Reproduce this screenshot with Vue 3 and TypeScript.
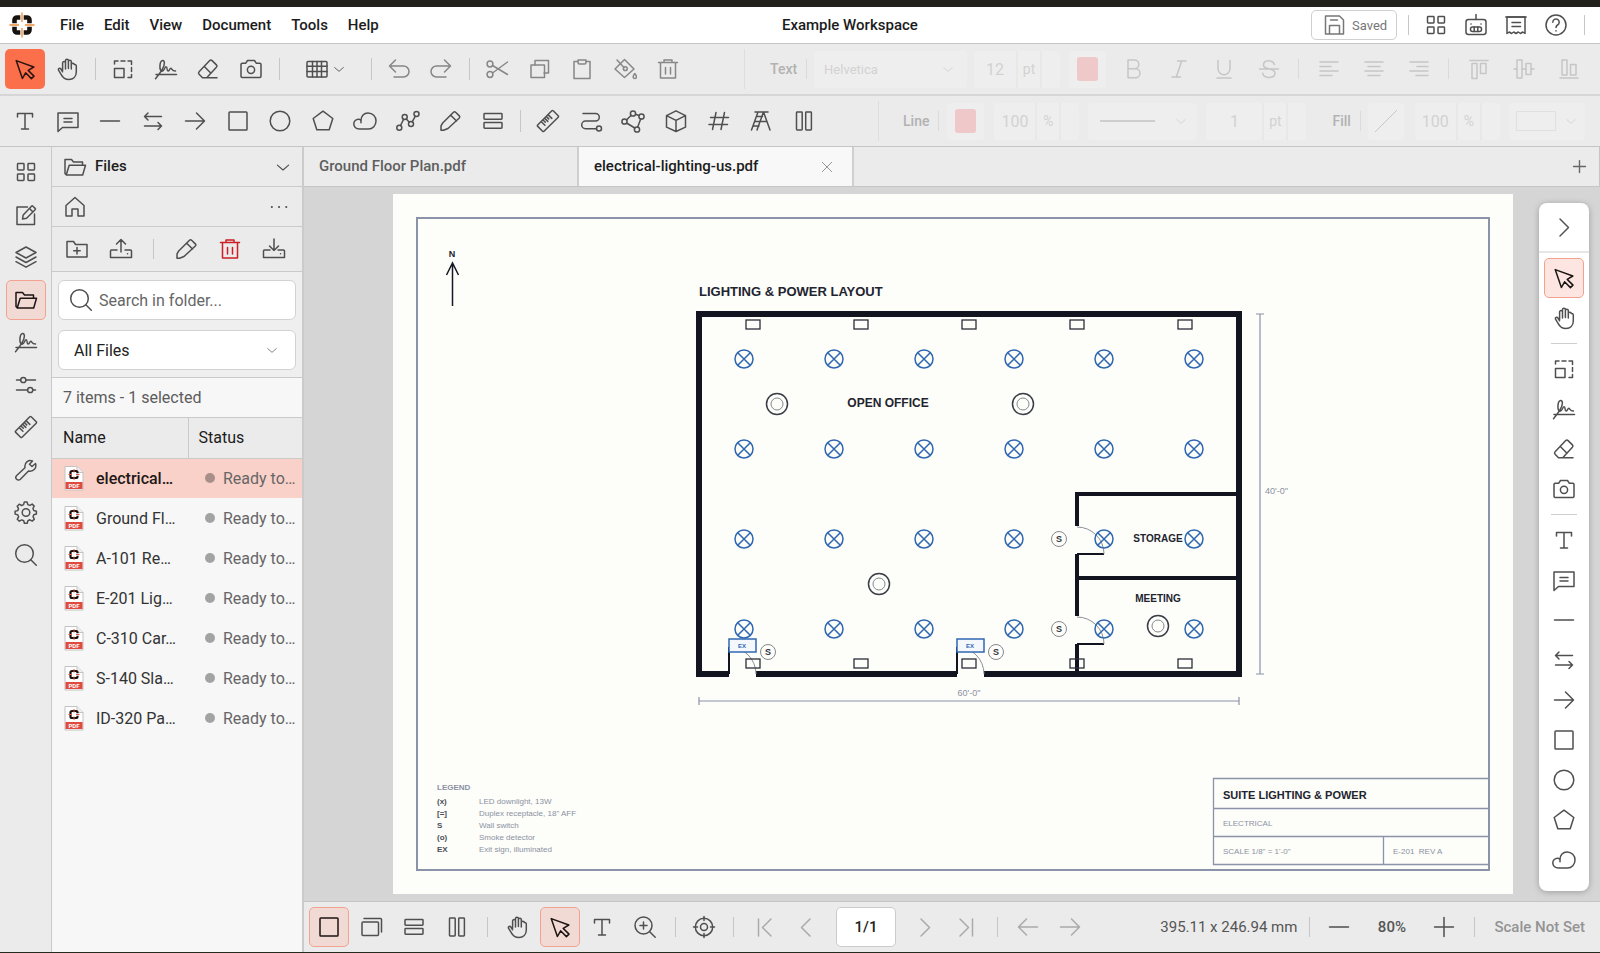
<script setup lang="ts">
import { h, ref } from 'vue'

const shapes: Record<string, string> = {
  cursor: '<path d="M3.2 3.6 20.8 10l-5.6 3.4 5.8 5.7-2.6 2.5-5.8-5.8-3.2 5.7z"/>',
  hand: '<path d="M7.6 13.5V6a1.4 1.4 0 0 1 2.9 0v6M10.5 6V3.6a1.4 1.4 0 0 1 2.9 0V11.5M13.4 4.6a1.4 1.4 0 0 1 2.9 0V12M16.3 7.6a1.4 1.4 0 0 1 2.9 0c1.6-.3 2.3.6 2.1 2V15c0 4.5-3 7.4-7.4 7.4-3.8 0-6-1.6-7.5-4.6L3.5 13.2c-.7-1.7 1.5-2.5 2.4-1.2l1.7 2.8"/>',
  region: '<path d="M3.5 7V4H7M10 4h4M17 4h3.5v3.5M20.5 10.5v4M20.5 17.5v3H17"/><rect x="3.5" y="11.5" width="9.5" height="9"/>',
  sign: '<path d="M2 17.5h20.5M1.5 21.7C5.5 17 10.4 10.5 10.4 6c0-3.4-3-3.4-3.9-.5C5.4 9 5.6 14.2 8.2 14.2c2.2 0 2.3-4.4 3.9-4.4s.4 4.2 1.9 4.2 1.6-2.7 2.8-2.7.8 2.7 4.7 2.7"/>',
  eraser: '<path d="M13.7 3.6a1.7 1.7 0 0 1 2.4 0l4.3 4.3a1.7 1.7 0 0 1 0 2.4L10.7 20.7H6.5l-3.4-3.5a1.7 1.7 0 0 1 0-2.4zM8.3 9.5l6.7 6.7M7 20.7h14"/>',
  camera: '<path d="M3.2 6.2h3.6l1.7-2.7h7l1.7 2.7h3.6c.7 0 1.2.5 1.2 1.2v11.9c0 .7-.5 1.2-1.2 1.2H3.2c-.7 0-1.2-.5-1.2-1.2V7.4c0-.7.5-1.2 1.2-1.2z"/><circle cx="12" cy="12.8" r="3.6"/>',
  table: '<rect x="2" y="4.5" width="20" height="15.5" rx="1"/><path d="M2 9.2h20M2 14.6h20M7.500 4.5V20M16.5 4.5V20M12 4.5V20"/>',
  chevron: '<path d="m4.5 9.5 7.5 6.5 7.5-6.5"/>',
  undo: '<path d="M8.5 3 2.5 9l6 6M2.5 9h14a5.500 5.500 0 0 1 0 11H7"/>',
  redo: '<path d="m15.5 3 6 6-6 6M21.5 9h-14a5.500 5.500 0 0 0 0 11H17"/>',
  cut: '<circle cx="5" cy="7" r="2.9"/><circle cx="5" cy="17.5" r="2.9"/><path d="m7.5 8.5 15 9M7.5 16 22.5 5"/>',
  copy: '<path d="M7 8V3.5h13.5V16H16"/><rect x="3" y="8" width="13.5" height="12.5"/>',
  paste: '<path d="M8 4.500H4v17h16v-17h-4"/><path d="M8 3h8v2.5c0 1-.7 1.5-1.5 1.5h-5C8.7 7 8 6.5 8 5.5z"/>',
  fill: '<path d="m11.5 2.5 9.500 9.500-9.500 8.500L2 12zM4 3l7 7.500"/><circle cx="12.3" cy="11.7" r="1.9"/><path d="M21.8 16.500c-2.800 3.500-1.500 5 0 5s2.800-1.500 0-5z"/>',
  trash: '<path d="M2.500 5.500h19M8 5.500V3h8v2.500M4.500 5.500V21h15V5.500M9.500 10.500v6.500M14.500 10.500v6.500"/>',
  text: '<path d="M4.500 8V4.500h15V8M12 4.500v15.500M8.500 20h7"/>',
  comment: '<path d="M2 4h20v14.500H6.500L2 22.500z"/><path d="M8 9.500h8M8 13h8"/>',
  line: '<path d="M2.500 12h19"/>',
  swap: '<path d="M3.500 7.500H20.500M7 4 3.500 7.500 7 11M3.500 17H20.500M17 13.500l3.500 3.500-3.500 3.500"/>',
  arrow: '<path d="M2.500 12h19M13.500 4l8 8-8 8"/>',
  square: '<rect x="3" y="3" width="18" height="18" rx=".8"/>',
  circle: '<circle cx="12" cy="12" r="9.8"/>',
  pentagon: '<path d="M12 2.200 21.800 9.500 18.200 20.800H5.800L2.200 9.500z"/>',
  cloud: '<path d="M6.500 20C2.800 20 .8 17.600.8 15c0-2.800 2.200-5 5-4.800 1.200.1 2 .7 2.200 1.500C8 7 11 4 15 4c4.700 0 8 3.500 8 8s-3.300 8-7.500 8zM8 11.700v2"/>',
  polyline: '<circle cx="3.3" cy="18.8" r="2.5"/><circle cx="8.7" cy="8" r="2.5"/><circle cx="15" cy="15" r="2.5"/><circle cx="20.5" cy="5" r="2.5"/><path d="m4.500 16.500 3.200-6.300M10.300 10l3 3.200M16.200 12.800l3-5.500"/>',
  pencil: '<path d="M15.500 3.200a1.500 1.500 0 0 1 2.100 0l3.700 3.700a1.500 1.500 0 0 1 0 2.100L10 19.500l-4.500 1.800H3v-4.500L4.700 14zM12.500 6l6 6"/>',
  rows: '<rect x="3" y="4.5" width="18" height="5.8" rx=".7"/><rect x="3" y="13.5" width="18" height="5.8" rx=".7"/>',
  ruler: '<path d="M1.700 16 15.800 1.800a1 1 0 0 1 1.400 0l5 5a1 1 0 0 1 0 1.400L8 22.200a1 1 0 0 1-1.400 0l-4.900-4.800a1 1 0 0 1 0-1.400zM5.600 13l3.300 3.300M9 9.600l2.800 2.800M12.500 6.100l3.300 3.300M7.300 11.300l2 2M10.700 7.900l2 2"/>',
  path: '<path d="M4 4.500h12.500a3.800 3.800 0 0 1 0 7.600H6.500a3.800 3.800 0 0 0 0 7.600h11"/><circle cx="20" cy="19.5" r="2.5"/>',
  nodes: '<circle cx="3.5" cy="12.5" r="2.6"/><circle cx="12" cy="4.5" r="2.6"/><circle cx="20.5" cy="7.5" r="2.6"/><circle cx="16" cy="20.5" r="2.6"/><path d="m5.500 11 4.700-4.700M14.500 5.300l3.500 1.200M19.700 10 16.700 18M5.600 14l8.200 5"/>',
  cube: '<path d="m12 1.800 9.500 4.800v11.500L12 22.500l-9.500-4.400V6.600zM2.500 6.600l9.500 4.700 9.500-4.700M12 11.300v11.200"/>',
  hash: '<path d="M9 3.500 5.500 20.500M17.500 3.500 14 20.500M3.500 8.500h18M2 15.500h18.500"/>',
  ladder: '<path d="M6 3h13M9 3 2.500 21M14.500 3 8 21M14.500 3 21 21M7.500 7.500h6M5.700 12.500h6M4 17h6M11 12.500h6.500"/>',
  columns: '<rect x="4.5" y="3" width="5.7" height="18" rx=".7"/><rect x="13.7" y="3" width="5.7" height="18" rx=".7"/>',
  apps: '<rect x="3.5" y="3.5" width="6.5" height="6.5" rx=".7"/><rect x="14" y="3.5" width="6.5" height="6.5" rx=".7"/><rect x="3.5" y="14" width="6.5" height="6.5" rx=".7"/><rect x="14" y="14" width="6.5" height="6.5" rx=".7"/>',
  edit: '<path d="M13.500 4H3v17.500h17.500V11"/><path d="M17.500 3.200a1 1 0 0 1 1.400 0l2.200 2.200a1 1 0 0 1 0 1.400l-8.500 8.500-4.100.8.700-4.200zM15.500 5.500l3.500 3.500"/>',
  layers: '<path d="m12 2 10 5.500L12 13 2 7.500zM2 12l10 5.500L22 12M2 16.700l10 5.500 10-5.500"/>',
  folder: '<path d="M3.500 20 2 18.500V4.500h6.500l2 2.500h9v3.300M3.200 20l3-9.700h16.300l-2.800 9.700z"/>',
  sliders: '<path d="M2.500 7h4.200M12 7h9.500M2.500 17h11M19 17h2.500"/><circle cx="9.3" cy="7" r="2.6"/><circle cx="16.2" cy="17" r="2.6"/>',
  wrench: '<path d="M18.500 3c-4-1.500-8.500 1.500-7.500 6.800L2.700 17.500a2.600 2.600 0 0 0 3.700 3.800L14.500 13c5 1 8.500-3 7-7.500L18 8.500l-2.500-2.300z"/>',
  gear: '<path d="m10.300 2-.7 2.600-2 .9-2.400-1.300-2 2 1.300 2.400-.8 2-2.600.7v2.800l2.600.7.9 2-1.300 2.400 2 2 2.400-1.300 2 .8.7 2.600h2.800l.7-2.600 2-.9 2.400 1.300 2-2-1.300-2.400.8-2 2.600-.7v-2.800l-2.600-.7-.9-2 1.300-2.400-2-2-2.400 1.300-2-.8-.7-2.600z"/><circle cx="12" cy="12.5" r="3.8"/>',
  search: '<circle cx="10.5" cy="10.5" r="8.8"/><path d="m16.800 16.800 5.500 5.500"/>',
  home: '<path d="M3 10.500 12 2.500l9 8V21h-6v-7H9v7H3z"/>',
  dots: '<path d="M4.800 12h.1M12 12h.1M19.200 12h.1" stroke-width="2"/>',
  newfolder: '<path d="M2 4.500h6.500l2 3H22V20H2zM12 10.500v6.500M8.700 13.700h6.500"/>',
  upload: '<path d="M8 13H2.500c-.6 0-1 .5-1 1v6.500h21V14c0-.5-.4-1-1-1H16M12 15V2.500M7.500 7 12 2.500 16.500 7M18.500 16.800h.1"/>',
  download: '<path d="M8 13H2.500c-.6 0-1 .5-1 1v6.500h21V14c0-.5-.4-1-1-1H16M12 2v11.500M7.500 9l4.500 4.500L16.500 9M18.500 16.800h.1"/>',
  save: '<path d="M3.500 3h14l4 4v14h-18zM7.500 21v-8.500h10V21M8.500 7h7"/>',
  robot: '<rect x="2" y="6.5" width="20" height="15" rx="2.5"/><path d="M12 1.500v5M7 11h.1M17 11h.1"/><rect x="6.5" y="14" width="11" height="4.500" rx="2"/><path d="M10.200 14v4.500M13.800 14v4.500"/>',
  receipt: '<path d="M3 4h18v16.500l-2.200-1.500-2.300 1.500-2.200-1.500L12 20.500 9.700 19l-2.200 1.500L5.200 19 3 20.500z"/><path d="M1.800 4h20.400M8 9.500h8.500M8 13.500h8.500"/>',
  help: '<circle cx="12" cy="12" r="10"/><path d="M8.800 9.200a3.200 3.200 0 1 1 4.800 2.800c-1.200.7-1.600 1.200-1.600 2.500M12 17.700v.2"/>',
  bold: '<path d="M6 3h6.500a4.300 4.300 0 0 1 0 8.700H6zM6 11.700h7.500a4.500 4.500 0 0 1 0 9H6z"/>',
  italic: '<path d="M10.500 4H19M5 20h8.500M14.700 4 9.300 20"/>',
  underline: '<path d="M6 3.500v8.300a6 6 0 0 0 12 0V3.500M5 21h14"/>',
  strike: '<path d="M17.500 7.500C16 2.300 6.500 2.800 6.500 8c0 5 11.500 2.500 11.500 8 0 5.800-11 5.800-12.300.3M2.500 12h19"/>',
  left: '<path d="M3 5h18M3 9.500h11M3 14h18M3 18.500h12"/>',
  center: '<path d="M3 5h18M6 9.500h12M3 14h18M6 18.500h12"/>',
  right: '<path d="M3 5h18M10 9.500h11M3 14h18M9 18.500h12"/>',
  atop: '<path d="M3 3.500h18"/><rect x="5" y="6.5" width="5" height="15"/><rect x="13.5" y="6.5" width="5.5" height="10"/>',
  amid: '<rect x="5" y="3" width="5" height="18"/><rect x="14" y="6.5" width="5" height="11"/><path d="M2 12h3M10 12h4M19 12h3"/>',
  abottom: '<path d="M3 21h18"/><rect x="5" y="3" width="5" height="15"/><rect x="13.5" y="7.5" width="5.5" height="10.5"/>',
  stack: '<rect x="2" y="7" width="16.5" height="13.5" rx="1"/><path d="M4 3.500h16.500c.8 0 1 .4 1 1V17"/>',
  zoomin: '<circle cx="10.5" cy="10.5" r="8.5"/><path d="m16.700 16.700 5.500 5.500M10.500 7v7M7 10.500h7"/>',
  target: '<circle cx="12" cy="12" r="8.7"/><circle cx="12" cy="12" r="3.5"/><path d="M12 1.500v4M12 18.500v4M1.500 12h4M18.500 12h4"/>',
  first: '<path d="M6.500 4v17M19 4l-8.500 8.500L19 21"/>',
  prev: '<path d="m16 4-8.500 8.500L16 21"/>',
  next: '<path d="m8 4 8.500 8.500L8 21"/>',
  last: '<path d="M17.500 4v17M5 4l8.500 8.500L5 21"/>',
  back: '<path d="M21.500 12h-19M10.500 4l-8 8 8 8"/>',
  plus: '<path d="M2.500 12h19M12 2.500v19"/>',
  close: '<path d="m4 4 16 16M20 4 4 20"/>',
}

const Icon = (props: { name: string }) =>
  h('svg', {
    class: 'icon',
    viewBox: '0 0 24 24',
    'aria-hidden': 'true',
    innerHTML: shapes[props.name],
  })
Icon.props = ['name']

const menus = ['File', 'Edit', 'View', 'Document', 'Tools', 'Help']
const drawTools = ['text', 'comment', 'line', 'swap', 'arrow', 'square', 'circle', 'pentagon', 'cloud', 'polyline', 'pencil', 'rows']
const measureTools = ['ruler', 'path', 'nodes', 'cube', 'hash', 'ladder', 'columns']
const rail = ['apps', 'edit', 'layers', 'folder', 'sign', 'sliders', 'ruler', 'wrench', 'gear', 'search']
const palette = [
  ['cursor', 'hand'],
  ['region', 'sign', 'eraser', 'camera'],
  ['text', 'comment', 'line', 'swap', 'arrow', 'square', 'circle', 'pentagon', 'cloud'],
]
const files = ['electrical…', 'Ground Fl…', 'A-101 Re…', 'E-201 Lig…', 'C-310 Car…', 'S-140 Sla…', 'ID-320 Pa…']
const selected = ref(0)
const query = ref('')
const page = ref('1/1')

const lightX = [351, 441, 531, 621, 711, 801]
const lightY = [165, 255, 345, 435]
const outletX = [360, 468, 576, 684, 792]
const smoke = [[384, 210], [630, 210], [486, 390], [765, 432]]
const switches = [[666, 345], [666, 435], [375, 458], [603, 458]]
const exits = [336, 564]
const legend = [
  ['(x)', 'LED downlight, 13W'],
  ['[=]', 'Duplex receptacle, 18" AFF'],
  ['S', 'Wall switch'],
  ['(o)', 'Smoke detector'],
  ['EX', 'Exit sign, illuminated'],
]
</script>

<template>
  <div class="app">
    <div class="strip"></div>
    <header class="menubar">
      <svg class="logo" viewBox="0 0 26 26" aria-label="Logo">
        <rect x="5.5" y="5.5" width="15" height="15" rx="2.5" fill="none" stroke="#17120e" stroke-width="4.6" />
        <path d="M13 0v10M13 16v10M0 13h10M16 13h10" stroke="#fff" stroke-width="3.4" />
        <path d="M13 .5v9.500M13 16v9.500M.5 13H10M16 13h9.500" stroke="#f08b33" stroke-width="1.3" />
      </svg>
      <nav class="menus">
        <button v-for="m in menus" :key="m" type="button">{{ m }}</button>
      </nav>
      <h1 class="title">Example Workspace</h1>
      <button class="saved" type="button"><Icon name="save" />Saved</button>
      <span class="sep short"></span>
      <div class="apps">
        <button v-for="i in ['apps', 'robot', 'receipt', 'help']" :key="i" class="tool" type="button" :aria-label="i"><Icon :name="i" /></button>
      </div>
      <span class="sep short"></span>
    </header>

    <div class="bar">
      <div class="group g2">
        <button class="tool primary" type="button" aria-label="Select"><Icon name="cursor" /></button>
        <button class="tool" type="button" aria-label="Pan"><Icon name="hand" /></button>
      </div>
      <span class="sep"></span>
      <div class="group g4">
        <button v-for="i in ['region', 'sign', 'eraser', 'camera']" :key="i" class="tool" type="button" :aria-label="i"><Icon :name="i" /></button>
      </div>
      <span class="sep"></span>
      <button class="tabletool" type="button" aria-label="Table"><Icon name="table" /><Icon class="tiny" name="chevron" /></button>
      <span class="sep"></span>
      <div class="group g2 soft">
        <button v-for="i in ['undo', 'redo']" :key="i" class="tool" type="button" :aria-label="i"><Icon :name="i" /></button>
      </div>
      <span class="sep"></span>
      <div class="group g5 soft">
        <button v-for="i in ['cut', 'copy', 'paste', 'fill', 'trash']" :key="i" class="tool" type="button" :aria-label="i"><Icon :name="i" /></button>
      </div>
      <div class="props">
        <label for="font">Text</label>
        <span class="sep"></span>
        <div class="field font">
          <select id="font" disabled><option>Helvetica</option></select>
          <Icon class="tiny" name="chevron" />
        </div>
        <div class="field num">
          <input aria-label="Font size" value="12" disabled /><span>pt</span><i></i>
        </div>
        <div class="field swatch"><button type="button" aria-label="Text colour" disabled></button></div>
        <div class="group p4">
          <button v-for="i in ['bold', 'italic', 'underline', 'strike']" :key="i" class="tool" type="button" :aria-label="i" disabled><Icon :name="i" /></button>
        </div>
        <span class="sep"></span>
        <div class="group p3">
          <button v-for="i in ['left', 'center', 'right']" :key="i" class="tool" type="button" :aria-label="i" disabled><Icon :name="i" /></button>
        </div>
        <span class="sep"></span>
        <div class="group p3">
          <button v-for="i in ['atop', 'amid', 'abottom']" :key="i" class="tool" type="button" :aria-label="i" disabled><Icon :name="i" /></button>
        </div>
      </div>
    </div>

    <div class="bar second">
      <div class="group g12">
        <button v-for="i in drawTools" :key="i" class="tool" type="button" :aria-label="i"><Icon :name="i" /></button>
      </div>
      <span class="sep"></span>
      <div class="group g7">
        <button v-for="i in measureTools" :key="i" class="tool" type="button" :aria-label="i"><Icon :name="i" /></button>
      </div>
      <div class="props">
        <label for="opacity">Line</label>
        <span class="sep"></span>
        <div class="field swatch"><button type="button" aria-label="Line colour" disabled></button></div>
        <div class="field num"><input id="opacity" value="100" disabled /><span>%</span><i></i></div>
        <button class="field dash" type="button" aria-label="Line style" disabled><b></b><Icon class="tiny" name="chevron" /></button>
        <div class="field num wide"><input aria-label="Line width" value="1" disabled /><span>pt</span><i></i></div>
        <label class="fill" for="fillop">Fill</label>
        <span class="sep"></span>
        <button class="field none" type="button" aria-label="Fill colour" disabled>
          <svg class="slash" viewBox="0 0 24 24"><path d="M1 23 23 1" /></svg>
        </button>
        <div class="field num"><input id="fillop" value="100" disabled /><span>%</span><i></i></div>
        <button class="field pattern" type="button" aria-label="Fill pattern" disabled><b></b><Icon class="tiny" name="chevron" /></button>
      </div>
    </div>

    <main class="body">
      <nav class="rail">
        <button v-for="i in rail" :key="i" class="tool" :class="{ active: i === 'folder' }" type="button" :aria-label="i"><Icon :name="i" /></button>
      </nav>

      <aside class="panel">
        <div class="phead">
          <Icon name="folder" /><h2>Files</h2>
          <button type="button" aria-label="Collapse"><Icon class="small" name="chevron" /></button>
        </div>
        <div class="phome">
          <button type="button" aria-label="Home"><Icon name="home" /></button>
          <button type="button" aria-label="More"><Icon name="dots" /></button>
        </div>
        <div class="ptools">
          <button type="button" aria-label="New folder"><Icon name="newfolder" /></button>
          <button type="button" aria-label="Upload"><Icon name="upload" /></button>
          <span class="sep short"></span>
          <button type="button" aria-label="Rename"><Icon name="pencil" /></button>
          <button class="danger" type="button" aria-label="Delete"><Icon name="trash" /></button>
          <button type="button" aria-label="Download"><Icon name="download" /></button>
        </div>
        <div class="filters">
          <div class="box">
            <Icon name="search" />
            <input v-model="query" type="text" aria-label="Search in folder" placeholder="Search in folder..." />
          </div>
          <div class="box pick">
            <select aria-label="File type"><option>All Files</option></select>
            <Icon class="tiny" name="chevron" />
          </div>
        </div>
        <p class="count">7 items - 1 selected</p>
        <table class="files">
          <thead>
            <tr><th class="name">Name</th><th>Status</th></tr>
          </thead>
          <tbody>
            <tr v-for="(f, n) in files" :key="f" :class="{ on: n === selected }" @click="selected = n">
              <td>
                <div class="cell">
                  <svg class="pdf" viewBox="0 0 20 26" aria-hidden="true">
                    <path d="M1 1.500h12l6 6V25H1z" fill="#fff" stroke="#c2c2c2" />
                    <path d="M13 1.500v6h6" fill="#f0f0f0" stroke="#c2c2c2" />
                    <path d="M13.500 8.200V7.600q0-1.600-1.600-1.600H8.100Q6.500 6 6.500 7.600v3.800q0 1.600 1.600 1.600h3.800q1.600 0 1.600-1.600v-.6" fill="none" stroke="#16110e" stroke-width="2.200" />
                    <path d="M10 4v3.500M10 11.500V15M4.500 9.500H8M12 9.500h3.500" stroke="#e2503f" />
                    <rect x="1.5" y="17" width="17" height="7" fill="#e04b3f" />
                    <text x="10" y="22.700" text-anchor="middle" font-size="6" font-weight="700" fill="#fff">PDF</text>
                  </svg>
                  <span>{{ f }}</span>
                </div>
              </td>
              <td><div class="cell status"><i></i><span>Ready to…</span></div></td>
            </tr>
          </tbody>
        </table>
      </aside>

      <section class="work">
        <div class="tabs">
          <button class="tab" type="button">Ground Floor Plan.pdf</button>
          <div class="tab current">
            <button type="button">electrical-lighting-us.pdf</button>
            <button class="x" type="button" aria-label="Close tab"><Icon name="close" /></button>
          </div>
          <button class="add" type="button" aria-label="New tab"><Icon name="plus" /></button>
        </div>

        <div class="canvas">
          <svg class="sheet" viewBox="0 0 1120 700" role="img" aria-label="Lighting and power layout">
            <rect width="1120" height="700" fill="#fdfdf9" />
            <g fill="none" stroke="#8a93a8">
              <rect x="24" y="24" width="1072" height="652" stroke-width="2" />
              <path d="M1096 584.500H820.500V670.500H1096M820.500 614.500H1096M820.500 642.500H1096M990.500 642.500v28" stroke-width="1.3" />
              <path d="M867 120V480M863 120h8M863 480h8M306 507H846M306 503v8M846 503v8" stroke-width="1.2" />
            </g>
            <path d="M59.500 112V69M53.500 81l6-12 6 12" fill="none" stroke="#161823" stroke-width="1.5" />
            <g fill="none" stroke="#12141f">
              <path d="M336 480H306V120H846V480H591M363 480H564" stroke-width="6" />
              <path d="M684 332V298M682 300H846M684 360v62M684 384H846M684 450v30" stroke-width="4" />
              <path d="M336 480v-27M564 480v-27M684 360h27M684 450h27" stroke-width="2" />
            </g>
            <path d="M336 453a27 27 0 0 1 27 27M564 453a27 27 0 0 1 27 27M684 333a27 27 0 0 1 27 27M684 423a27 27 0 0 1 27 27" fill="none" stroke="#8d909b" />
            <g fill="none" stroke="#2c2f3a" stroke-width="1.3">
              <template v-for="x in outletX" :key="x">
                <rect :x="x - 7" y="126" width="14" height="9" />
                <rect :x="x - 7" y="465" width="14" height="9" />
              </template>
            </g>
            <g fill="none" stroke="#2f67b1" stroke-width="1.5">
              <template v-for="y in lightY" :key="y">
                <g v-for="x in lightX" :key="x">
                  <circle :cx="x" :cy="y" r="9" />
                  <path :d="`M${x - 6} ${y - 6}l12 12M${x + 6} ${y - 6}l-12 12`" />
                </g>
              </template>
            </g>
            <g v-for="s in smoke" :key="s.join()" fill="none">
              <circle :cx="s[0]" :cy="s[1]" r="10.5" stroke="#3a3d47" stroke-width="1.5" />
              <circle :cx="s[0]" :cy="s[1]" r="6" stroke="#85888f" />
            </g>
            <g v-for="s in switches" :key="s.join()">
              <circle :cx="s[0]" :cy="s[1]" r="7.5" fill="#fdfdf9" stroke="#85888f" />
              <text :x="s[0]" :y="s[1] + 3" class="mark" text-anchor="middle">S</text>
            </g>
            <g v-for="x in exits" :key="x">
              <rect :x="x" y="445" width="27" height="13" fill="#f4f8fd" stroke="#2f67b1" stroke-width="1.5" />
              <text :x="x + 13" y="454" class="exit" text-anchor="middle">EX</text>
            </g>
            <g class="strong">
              <text x="306" y="102" font-size="13">LIGHTING &amp; POWER LAYOUT</text>
              <text x="495" y="213" font-size="12" text-anchor="middle">OPEN OFFICE</text>
              <text x="765" y="348" font-size="10" text-anchor="middle">STORAGE</text>
              <text x="765" y="408" font-size="10" text-anchor="middle">MEETING</text>
              <text x="59" y="63" font-size="9" text-anchor="middle">N</text>
              <text x="830" y="605" font-size="11">SUITE LIGHTING &amp; POWER</text>
            </g>
            <g class="faint">
              <text x="872" y="300" font-size="9">40'-0"</text>
              <text x="576" y="502" font-size="9" text-anchor="middle">60'-0"</text>
              <text x="830" y="632">ELECTRICAL</text>
              <text x="830" y="660">SCALE 1/8" = 1'-0"</text>
              <text x="1000" y="660">E-201&#160; REV A</text>
              <text x="44" y="596" font-weight="700">LEGEND</text>
              <template v-for="(l, n) in legend" :key="n">
                <text x="44" :y="610 + n * 12" class="key">{{ l[0] }}</text>
                <text x="86" :y="610 + n * 12">{{ l[1] }}</text>
              </template>
            </g>
          </svg>

          <div class="palette">
            <button class="fold" type="button" aria-label="Hide tools"><Icon name="next" /></button>
            <div v-for="(g, n) in palette" :key="n" class="pgroup">
              <button v-for="i in g" :key="i" class="tool" :class="{ active: i === 'cursor' }" type="button" :aria-label="i"><Icon :name="i" /></button>
            </div>
          </div>
        </div>

        <footer class="foot">
          <div class="group g4">
            <button v-for="i in ['square', 'stack', 'rows', 'columns']" :key="i" class="tool" :class="{ active: i === 'square' }" type="button" :aria-label="i"><Icon :name="i" /></button>
          </div>
          <span class="sep short"></span>
          <div class="group g4">
            <button v-for="i in ['hand', 'cursor', 'text', 'zoomin']" :key="i" class="tool" :class="{ active: i === 'cursor' }" type="button" :aria-label="i"><Icon :name="i" /></button>
          </div>
          <span class="sep short"></span>
          <button class="tool" type="button" aria-label="Calibrate"><Icon name="target" /></button>
          <span class="sep short"></span>
          <div class="group g2 dim">
            <button v-for="i in ['first', 'prev']" :key="i" class="tool" type="button" :aria-label="i" disabled><Icon :name="i" /></button>
          </div>
          <input v-model="page" class="page" type="text" aria-label="Page" />
          <div class="group g2 dim">
            <button v-for="i in ['next', 'last']" :key="i" class="tool" type="button" :aria-label="i" disabled><Icon :name="i" /></button>
          </div>
          <span class="sep short"></span>
          <div class="group g2 dim">
            <button v-for="i in ['back', 'arrow']" :key="i" class="tool" type="button" :aria-label="i" disabled><Icon :name="i" /></button>
          </div>
          <span class="size">395.11 x 246.94 mm</span>
          <span class="sep short"></span>
          <button class="tool" type="button" aria-label="Zoom out"><Icon name="line" /></button>
          <span class="pct">80%</span>
          <button class="tool" type="button" aria-label="Zoom in"><Icon name="plus" /></button>
          <span class="sep short"></span>
          <button class="scale" type="button">Scale Not Set</button>
        </footer>
      </section>
    </main>
    <div class="edge"></div>
  </div>
</template>

<style>
body { margin: 0; }
</style>

<style scoped>
* { box-sizing: border-box; }
.app {
  display: flex;
  flex-direction: column;
  min-height: 100vh;
  background: #ebebeb;
  color: #1c1c1c;
  font-family: Roboto, "Liberation Sans", sans-serif;
  font-size: 15px;
}
button, input, select { margin: 0; padding: 0; border: 0; background: none; color: inherit; font: inherit; }
.icon {
  display: block;
  flex: none;
  width: 24px;
  height: 24px;
  fill: none;
  stroke: currentColor;
  stroke-width: 1.5;
  stroke-linejoin: round;
  stroke-linecap: round;
}
.icon.tiny { width: 14px; height: 14px; }
.icon.small { width: 18px; height: 18px; }
.tool {
  display: flex;
  flex: none;
  align-items: center;
  justify-content: center;
  width: 40px;
  height: 40px;
  border: 1px solid transparent;
  border-radius: 5px;
  color: #4f4f4f;
}
.tool.active { border-color: #f3a28f; background: #f1dad4; color: #1d1514; }
.tool.primary { background: #fb704b; color: #2b1510; }
.sep { flex: none; width: 1px; height: 22px; background: #c6c6c6; }
.sep.short { height: 20px; }
.group { display: flex; flex: none; justify-content: space-around; }
.g2 { width: 84px; }
.g4 { width: 170px; }
.g5 { width: 213px; }
.g7 { width: 298px; }
.g12 { width: 510px; }
.soft .tool { color: #878787; }
.dim .tool { color: #aaa; }

.strip { height: 7px; background: #22211c; }
.menubar { display: flex; align-items: center; height: 37px; padding: 0 15px 0 9px; border-bottom: 1px solid #c4c6c4; background: #fff; }
.logo { width: 26px; height: 26px; }
.menus { display: flex; gap: 20px; margin-left: 25px; font-weight: 500; }
.title { flex: 1; margin: 0 0 0 10px; font-size: 15px; font-weight: 500; text-align: center; }
.saved { display: flex; align-items: center; gap: 6px; width: 86px; height: 30px; margin-right: 11px; padding-left: 10px; border: 1px solid #d0d0d0; border-radius: 5px; color: #777; font-size: 13px; }
.apps { display: flex; margin: 0 8px 0 7px; }
.apps .tool { height: 34px; }

.bar { display: flex; align-items: center; height: 52px; padding-left: 4px; border-bottom: 2px solid #d6d6d6; }
.bar.second { height: 51px; border-bottom: 1px solid #c4c6c4; }
.bar > .sep { margin: 0 6px 0 7px; }
.bar.second > .sep { margin: 0 6px; }
.tabletool { display: flex; align-items: center; justify-content: center; gap: 3px; width: 78px; height: 40px; color: #4f4f4f; }
.props { display: flex; flex: 1; align-items: center; height: 40px; margin-left: 55px; padding-left: 25px; border-left: 1px solid #dedede; color: #c6c6c6; }
.props label { color: #b2b2b2; font-size: 14px; font-weight: 500; }
.props .sep { height: 20px; margin: 0 7px 0 9px; background: #dadada; }
.props .tool { color: #c6c6c6; }
.field { display: flex; flex: none; align-items: center; height: 37px; border-radius: 4px; background: #eee; color: #d2d2d2; }
.field select { flex: 1; padding-left: 10px; appearance: none; font-size: 13px; opacity: 1; }
.field.font { width: 153px; margin-right: 7px; padding-right: 12px; }
.num { width: 86px; margin-right: 9px; font-size: 14px; }
.num.wide { width: 100px; margin-right: 27px; }
.num input { flex: 1; min-width: 0; height: 37px; border-right: 2px solid #e8e8e8; font-size: 16px; text-align: center; }
.num span { width: 22px; text-align: center; }
.num i { width: 20px; height: 37px; border-left: 2px solid #e8e8e8; }
.swatch { justify-content: center; width: 37px; margin-right: 5px; }
.swatch button { width: 21px; height: 24px; border-radius: 3px; background: #efc9c9; }
.p4 { width: 180px; }
.p3 { width: 135px; }
.props .p4 + .sep, .props .p3 + .sep { margin: 0 7px; }
.dash { gap: 19px; width: 109px; margin-right: 9px; padding-left: 12px; }
.dash b { width: 55px; height: 2px; background: #cecece; }
.none { justify-content: center; width: 36px; margin-right: 11px; }
.slash { width: 24px; height: 24px; fill: none; stroke: #c6c6c6; }
.second .num { width: 85px; }
.second .num.wide { width: 100px; margin-right: 26px; }
.pattern { gap: 8px; width: 76px; padding-left: 7px; }
.pattern b { width: 40px; height: 20px; border: 1px solid #e0e0e0; }
.second .props { margin-left: 53px; padding-left: 24px; }
.second .swatch { margin: 0 10px 0 1px; }

.body { display: flex; flex: 1; min-height: 0; }
.rail { display: flex; flex: none; flex-direction: column; align-items: center; justify-content: space-between; width: 51px; height: 423px; margin-top: 5px; padding-left: 1px; }
.panel { flex: none; width: 253px; border-right: 2px solid #cbcbcb; border-left: 1px solid #c9c9c9; background: #f7f7f7; }
.panel button { display: flex; color: #4f4f4f; }
.panel button.danger { color: #cc1f24; }
.phead, .phome, .ptools { display: flex; align-items: center; border-bottom: 1px solid #c9cbc9; background: #ebebeb; color: #4f4f4f; }
.phead { height: 40px; padding: 0 10px 0 11px; }
.phead h2 { flex: 1; margin: 0 0 0 8px; color: #1c1c1c; font-size: 15px; font-weight: 500; line-height: 18px; padding-bottom: 1px; }
.phome { justify-content: space-between; height: 40px; padding: 0 11px; }
.ptools { justify-content: space-between; height: 45px; padding: 0 16px 0 13px; }
.filters { display: flex; flex-direction: column; gap: 10px; padding: 8px 6px 7px; border-bottom: 1px solid #c9cbc9; background: #efefef; }
.box { display: flex; align-items: center; height: 40px; border: 1px solid #d2d2d2; border-radius: 6px; background: #fff; color: #4f4f4f; font-size: 16px; }
.box .icon { margin: 0 6px 0 10px; }
.box input { flex: 1; min-width: 0; }
.box input::placeholder { color: #666; opacity: 1; }
.box select { flex: 1; padding-left: 15px; appearance: none; color: #222; }
.box .tiny { margin-right: 16px; color: #777; }
.count { height: 40px; margin: 0; padding-left: 11px; border-bottom: 1px solid #c9cbc9; color: #5c5c5c; font-size: 16px; line-height: 39px; }
.files { width: 100%; border-collapse: collapse; table-layout: fixed; font-size: 16px; }
.files th { height: 40px; padding: 0 0 0 10px; border-bottom: 1px solid #c9cbc9; background: #ebebeb; font-weight: 400; text-align: left; }
.files .name { width: 136px; border-right: 1px solid #c9cbc9; padding-left: 11px; }
.files td { height: 40px; padding: 0; color: #333; }
.files .on td { background: #f9d1c9; }
.files .on td:first-child { color: #221815; font-weight: 500; }
.cell { display: flex; align-items: center; gap: 12px; padding-left: 12px; white-space: nowrap; }
.pdf { width: 20px; height: 26px; }
.cell.status { gap: 8px; padding-left: 17px; color: #666; font-weight: 400; }
.status i { width: 10px; height: 10px; border-radius: 5px; background: #a3a3a3; }
.on .status i { background: #a98f89; }

.work { display: flex; flex: 1; flex-direction: column; min-width: 0; }
.tabs { display: flex; height: 40px; border-right: 1px solid #c4c6c4; border-bottom: 1px solid #c4c6c4; font-weight: 500; }
.tab { display: flex; flex: none; align-items: center; justify-content: space-between; width: 275px; padding: 0 18px 2px 15px; border-right: 2px solid #cfcfcf; color: #5e5e5e; }
.current { background: #f8f8f8; color: #1c1c1c; }
.x { padding-top: 2px; }
.x .icon { width: 14px; height: 14px; color: #888; }
.add { margin: 0 12px 0 auto; color: #666; }
.add .icon { width: 15px; height: 15px; stroke-width: 2.2; }
.canvas { position: relative; flex: 1; padding: 7px 87px 7px 89px; background: #d5d5d5; }
.sheet { display: block; width: 100%; height: auto; font-family: "Liberation Sans", Arial, sans-serif; }
.strong { fill: #22242f; font-weight: 700; }
.faint { fill: #8b92a3; font-size: 8px; }
.key { fill: #4a4d58; font-weight: 700; }
.mark { fill: #33353f; font-size: 9px; font-weight: 700; }
.exit { fill: #2f67b1; font-size: 6px; font-weight: 700; }
.palette { position: absolute; top: 16px; right: 11px; width: 50px; padding-bottom: 11px; border-radius: 8px; background: #fff; box-shadow: 0 1px 6px #0004; }
.fold { display: flex; align-items: center; justify-content: center; width: 50px; height: 50px; border-bottom: 2px solid #e6e6e6; color: #555; }
.pgroup { display: flex; flex-direction: column; align-items: center; padding-top: 5px; }
.pgroup + .pgroup::before { content: ""; width: 26px; height: 1px; margin-bottom: 5px; background: #cfcfcf; }
.palette .active { background: #fde6e1; }
.foot { display: flex; align-items: center; height: 51px; padding: 0 15px 0 4px; border-top: 1px solid #c4c6c4; color: #555; }
.foot > .sep { margin: 0 9px; }
.foot > .g4 + .sep { margin: 0 8px 0 9px; }
.page { width: 60px; height: 40px; margin: 0 8px 0 9px; border: 1px solid #cbcbcb; border-radius: 5px; background: #fff; color: #1c1c1c; font-weight: 500; text-align: center; }
.size { margin-left: auto; }
.foot > .size + .sep { margin: 0 9px 0 12px; }
.pct { width: 65px; font-weight: 500; text-align: center; }
.foot > .pct + .tool + .sep { margin: 0 9px 0 10px; }
.scale { margin-left: 10px; color: #949494; font-weight: 500; }
.edge { height: 1px; background: #25291f; }
</style>
